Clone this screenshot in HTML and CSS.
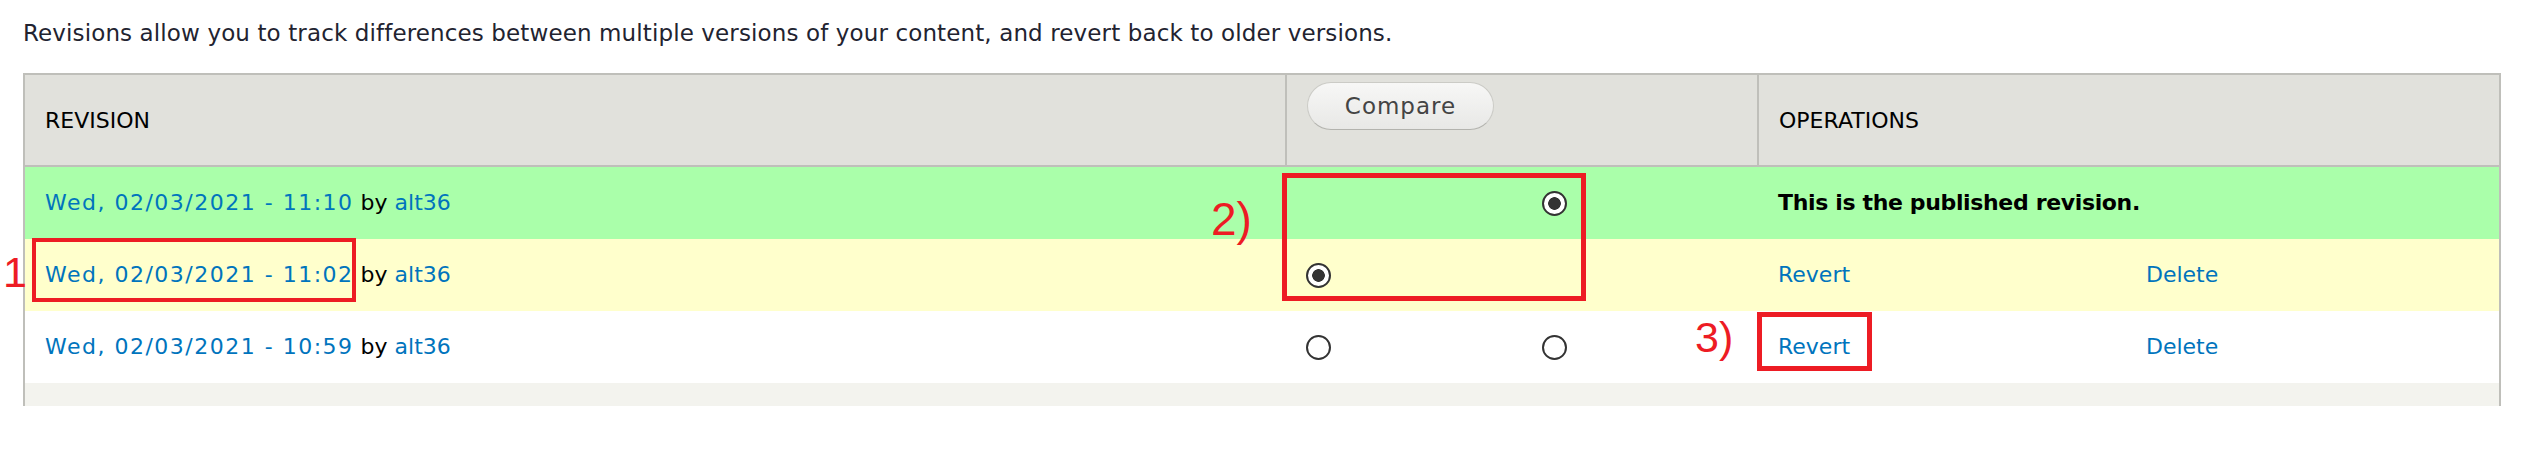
FILE: index.html
```html
<!DOCTYPE html>
<html lang="en">
<head>
<meta charset="utf-8">
<title>Revisions</title>
<link rel="stylesheet" href="styles.css">
</head>
<body>
<div class="page">
  <p class="intro">Revisions allow you to track differences between multiple versions of your content, and revert back to older versions.</p>
  <div class="table-clip">
    <table class="revisions">
      <colgroup>
        <col class="c-rev">
        <col class="c-radio">
        <col class="c-radio">
        <col class="c-op">
        <col class="c-op2">
      </colgroup>
      <thead>
        <tr>
          <th>REVISION</th>
          <th colspan="2" class="th-compare"><button class="compare" type="button">Compare</button></th>
          <th colspan="2">OPERATIONS</th>
        </tr>
      </thead>
      <tbody>
        <tr class="row-published">
          <td><a href="#" class="date">Wed, 02/03/2021 - 11:10</a> by <a href="#">alt36</a></td>
          <td></td>
          <td><span class="radio checked"></span></td>
          <td colspan="2" class="published">This is the published revision.</td>
        </tr>
        <tr class="row-selected">
          <td><a href="#" class="date">Wed, 02/03/2021 - 11:02</a> by <a href="#">alt36</a></td>
          <td><span class="radio checked"></span></td>
          <td></td>
          <td><a href="#">Revert</a></td>
          <td><a href="#">Delete</a></td>
        </tr>
        <tr class="row-plain">
          <td><a href="#" class="date">Wed, 02/03/2021 - 10:59</a> by <a href="#">alt36</a></td>
          <td><span class="radio"></span></td>
          <td><span class="radio"></span></td>
          <td><a href="#">Revert</a></td>
          <td><a href="#">Delete</a></td>
        </tr>
        <tr class="row-odd">
          <td></td>
          <td><span class="radio"></span></td>
          <td><span class="radio"></span></td>
          <td></td>
          <td></td>
        </tr>
      </tbody>
    </table>
  </div>

  <span class="note note-1">1</span>
  <span class="mark mark-1"></span>
  <span class="note note-2">2)</span>
  <span class="mark mark-2"></span>
  <span class="note note-3">3)</span>
  <span class="mark mark-3"></span>
</div>
</body>
</html>
```

FILE: styles.css
```css
html, body {
  margin: 0;
  padding: 0;
  background: #ffffff;
}

.page {
  position: relative;
  padding-left: 23px;
  font-family: "DejaVu Sans", "Liberation Sans", sans-serif;
  font-size: 22px;
  color: #000;
}

.intro {
  margin: 0;
  padding-top: 20px;
  line-height: 26px;
  font-size: 23px;
  letter-spacing: 0.12px;
  color: #222330;
}

.table-clip {
  margin-top: 27px;
  height: 333px;
  overflow: hidden;
}

.revisions {
  width: 2478px;
  table-layout: fixed;
  border-collapse: collapse;
  border: 2px solid #bfbfba;
}

.c-rev { width: 1262px; }
.c-radio { width: 236px; }
.c-op { width: 368px; }
.c-op2 { width: auto; }

.revisions th {
  height: 83px;
  padding: 0 20px;
  text-align: left;
  font-weight: normal;
  font-size: 22px;
  color: #000;
  background: #e1e1dc;
  border-right: 2px solid #bfbfba;
  border-bottom: 2px solid #bfbfba;
  vertical-align: middle;
}

.revisions th.th-compare {
  vertical-align: top;
  padding-top: 7px;
}

.compare {
  width: 187px;
  height: 48px;
  border: 1px solid #cbcbc6;
  border-bottom-color: #b3b3ae;
  border-radius: 24px;
  background: linear-gradient(#f7f7f6, #e8e8e6);
  font-family: "DejaVu Sans", "Liberation Sans", sans-serif;
  font-size: 23px;
  letter-spacing: 1px;
  color: #444444;
  padding: 0;
  margin: 0;
}

.revisions td {
  height: 72px;
  padding: 0 20px;
  vertical-align: middle;
  line-height: 26px;
  white-space: nowrap;
}

.revisions a {
  color: #0074bd;
  text-decoration: none;
}

.revisions a.date {
  letter-spacing: 1.5px;
}

.row-published td { background: #aaffaa; }
.row-selected td { background: #ffffcc; }
.row-plain td { background: #ffffff; }
.row-odd td { background: #f3f3ee; }

.published {
  font-weight: bold;
  letter-spacing: -0.35px;
}

.radio {
  display: inline-block;
  width: 21px;
  height: 21px;
  border: 2px solid #333333;
  border-radius: 50%;
  background: #ffffff;
  vertical-align: middle;
}

.radio.checked {
  background: radial-gradient(circle, #333333 0 6px, #ffffff 6.6px);
}

.note {
  position: absolute;
  font-family: "Liberation Sans", Arial, sans-serif;
  line-height: 1;
  color: #ed1c24;
}

.note-1 { left: 3px; top: 251px; font-size: 43px; }
.note-2 { left: 1211px; top: 196px; font-size: 46px; }
.note-3 { left: 1695px; top: 316px; font-size: 43px; }

.mark {
  position: absolute;
  box-sizing: border-box;
  border: 5px solid #ed1c24;
}

.mark-1 { left: 32px; top: 238px; width: 324px; height: 64px; border-width: 4px; }
.mark-2 { left: 1282px; top: 173px; width: 304px; height: 128px; }
.mark-3 { left: 1757px; top: 312px; width: 115px; height: 59px; }
```
